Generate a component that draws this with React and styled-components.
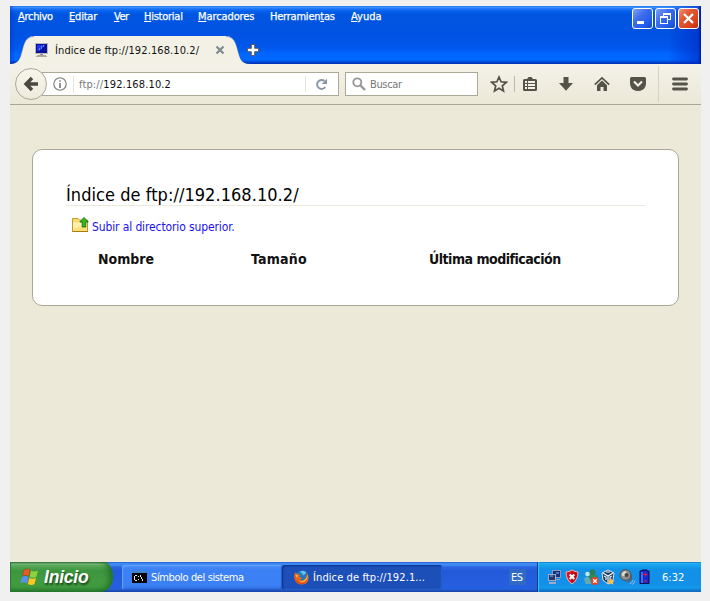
import React from "react";
import styled, { createGlobalStyle, css } from "styled-components";

const UI = `"DejaVu Sans Condensed", "Noto Sans", sans-serif`;

const GlobalStyle = createGlobalStyle`
  *, *::before, *::after { box-sizing: border-box; }
  body { margin: 0; background: #f0f0f0; font: 11px/16px ${UI}; color: #222; }
  svg { display: block; flex: none; }
`;

const Screen = styled.div`
  height: 601px;
  padding: 6px 9px 9px 10px;
  overflow: hidden;
`;

const Desktop = styled.div`
  height: 586px;
  display: flex;
  flex-direction: column;
  background: #ece9d8;
`;

/* Title bar */
const TitleBar = styled.header`
  height: 58px;
  flex: none;
  position: relative;
  background:
    linear-gradient(90deg, rgba(0, 45, 190, 0.45), transparent 5px),
    linear-gradient(270deg, #001b9c 0, rgba(0, 40, 190, 0.6) 3px, rgba(0, 40, 200, 0.45) 12px, transparent 34px),
    linear-gradient(180deg, #1a6fe8 0, #3d94ff 1px, #1b74f8 3px, #0560ec 5px, #0055e0 9px, #0053e2 28px, #0057ec 42px, #0066ff 48px, #0068ff 54px, #0049d4 56px, #002fae 58px);
`;

const MenuBar = styled.nav`
  display: flex;
  height: 30px;
  padding: 3px 0 0 8px;
`;

const MenuItem = styled.span`
  width: ${(p) => p.$width}px;
  white-space: nowrap;
  color: #fff;
  letter-spacing: ${(p) => p.$track}px;
  -webkit-text-stroke: 0.25px #fff;
  u { text-underline-offset: 1px; text-decoration-thickness: 1px; }
`;

const TabStrip = styled.div`
  display: flex;
  height: 28px;
`;

const Tab = styled.div`
  width: 192px;
  height: 28px;
  display: flex;
  align-items: center;
  background: #f3f1e6;
  color: #111;
`;

const TabLabel = styled.span`
  width: 160px;
  margin-left: 6px;
  padding-top: 1px;
  letter-spacing: 0.1px;
  white-space: nowrap;
`;

const NewTab = styled.div`
  margin: 8px 0 0 -3px;
`;

const WindowButtons = styled.div`
  position: absolute;
  top: 2px;
  right: 2px;
  display: flex;
  gap: 2px;
`;

const WindowButton = styled.button`
  width: 21px;
  height: 21px;
  padding: 0;
  border: 1px solid #fff;
  border-radius: 3px;
  background: ${(p) =>
    p.$danger
      ? "linear-gradient(135deg, #eb9479 0%, #e35a36 35%, #d9431c 75%, #b82f08 100%)"
      : "linear-gradient(135deg, #7da1f4 0%, #3d6cec 40%, #215cec 75%, #1447c4 100%)"};
`;

/* Navigation toolbar */
const Toolbar = styled.div`
  height: 41px;
  flex: none;
  display: flex;
  align-items: center;
  padding-left: 5px;
  border-bottom: 1px solid #aaa797;
  background: linear-gradient(#f4f2e8, #ebe8d8);
`;

const BackButton = styled.button`
  width: 32px;
  height: 32px;
  padding: 0;
  flex: none;
  display: grid;
  place-items: center;
  z-index: 1;
  border: 1px solid #aca999;
  border-radius: 50%;
  background: linear-gradient(#f7f5ec, #eeebdc);
`;

const Field = styled.div`
  height: 24px;
  display: flex;
  align-items: center;
  background: #fff;
  border: 1px solid #aca999;
`;

const AddressField = styled(Field)`
  width: 297px;
  margin-left: -5px;
  padding-left: 10px;
`;

const Address = styled.span`
  width: 232px;
  margin-left: 6px;
  padding: 1px 0 0 5px;
  border-left: 1px solid #e5e3da;
  letter-spacing: 0.14px;
  color: #111;
  i { font-style: normal; color: #777; }
`;

const Reload = styled.span`
  padding: 2px 0 1px 9px;
  border-left: 1px solid #e5e3da;
`;

const SearchField = styled(Field)`
  width: 133px;
  margin-left: 6px;
  padding-left: 6px;
  gap: 4px;
  color: #777;
  letter-spacing: -0.35px;
`;

const SearchHint = styled.span`
  padding-top: 2px;
`;

const Divider = styled.span`
  width: 1px;
  height: ${(p) => p.$height}px;
  flex: none;
  background: ${(p) => p.$color};
`;

const Tools = styled.div`
  display: grid;
  grid-template-columns: 31px 1px 30px 42px 30px 41px 1px 42px;
  align-items: center;
  justify-items: center;
  margin-left: 5px;
`;

/* Directory listing */
const Viewport = styled.main`
  flex: 1;
  padding: 44px 22px 0;
`;

const Card = styled.section`
  height: 157px;
  padding: 33px 33px 0;
  border: 1px solid #aba898;
  border-radius: 10px;
  background: #fff;
`;

const Title = styled.h1`
  margin: 0;
  height: 23px;
  border-bottom: 1px solid #ece9dc;
  font: 400 18px/23px ${UI};
  letter-spacing: 0.05px;
  color: #000;
`;

const ParentLink = styled.a`
  display: flex;
  gap: 3px;
  height: 18px;
  margin: 11px 0 0 6px;
  font-size: 12px;
  line-height: 20px;
  letter-spacing: -0.12px;
  color: #1a12f0;
`;

const Columns = styled.div`
  display: grid;
  grid-template-columns: 153px 178px 1fr;
  margin: 14px 0 0 32px;
  font: 700 14px/20px ${UI};
  color: #111;
`;

const Heading = styled.span`
  letter-spacing: ${(p) => p.$track || 0}px;
`;

/* Taskbar */
const Taskbar = styled.footer`
  height: 30px;
  flex: none;
  display: flex;
  color: #fff;
  background: linear-gradient(#1d4eb9 0, #3d86f0 1px, #3f8cf3 3px, #2b67e0 5px, #2259d8 9px, #255fe0 24px, #2460dc 27px, #1941a5 30px);
`;

const StartButton = styled.button`
  width: 103px;
  height: 30px;
  padding: 0 0 1px 10px;
  border: 0;
  border-radius: 0 9px 12px 0 / 0 15px 15px 0;
  display: flex;
  align-items: center;
  gap: 4px;
  color: #fff;
  font: italic 700 17.5px/28px "Liberation Sans", sans-serif;
  letter-spacing: -0.2px;
  text-shadow: 1px 2px 2px #17451a;
  background: linear-gradient(#2f6f35 0, #72b574 2px, #4ea250 5px, #3c963e 9px, #429b40 20px, #3e993d 25px, #23752b 30px);
  box-shadow: inset -8px 0 7px -5px #1f6925, inset 1px 0 1px #2d7936;
`;

const TaskButton = styled.button`
  width: 160px;
  height: 25px;
  margin: 3px 0 0 ${(p) => p.$gap}px;
  padding: 0 0 0 ${(p) => p.$inset}px;
  display: flex;
  align-items: center;
  gap: 4px;
  border: 0;
  border-radius: 3px;
  color: #fff;
  font: 11px/16px ${UI};
  letter-spacing: ${(p) => p.$track}px;
  white-space: nowrap;
  ${(p) =>
    p.$active
      ? css`
          background: #1c50b8;
          box-shadow: inset 1px 1px 2px #0c3288, inset -1px -1px 1px #2a65cd;
        `
      : css`
          background: linear-gradient(#4c8ff7, #3b80f4 5px, #3b80f4 20px, #2e6ee0);
          box-shadow: inset 1px 1px 1px #66a3fb, inset -1px -1px 1px #2458c2;
        `}
`;

const Language = styled.span`
  height: 16px;
  margin: 7px 0 0 67px;
  padding: 0 2px;
  width: 17px;
  line-height: 17px;
  letter-spacing: -0.6px;
  background: #316ac5;
`;

const Tray = styled.div`
  width: 164px;
  margin-left: auto;
  display: grid;
  grid-template-columns: 18px 19px 17px 18px 20px 20px 1fr;
  align-items: center;
  padding-left: 9px;
  border-left: 1px solid #0b3d91;
  background: linear-gradient(#0d55ae 0, #23b1f5 1px, #1aa3ee 3px, #1191e8 7px, #1390e8 22px, #1499ec 26px, #0f60b5 30px);
  box-shadow: inset 1px 0 1px #35c2f8;
`;

const Clock = styled.time`
  padding-left: 3px;
  padding-top: 1px;
`;

const TabEdge = ({ flip }) => (
  <svg width="24" height="28" viewBox="0 0 24 28">
    <g transform={flip ? "translate(24 0) scale(-1 1)" : undefined}>
      <path d="M0 28C9 28 10 22 12 15C14 7 16 0 24 0V28Z" fill="#f3f1e6" />
      <path d="M0 27.5C9 27.5 10 22 12 15C14 7 16 .5 24 .5" fill="none" stroke="#174da8" strokeOpacity=".45" />
    </g>
  </svg>
);

const ComputerIcon = () => (
  <svg width="15" height="16" viewBox="0 0 15 16" shapeRendering="crispEdges">
    <path d="M1 1h13v11H1z" fill="#b9b9b4" />
    <path d="M2 2h11v9H2z" fill="#0a109b" />
    <path d="M3 3h8L6 9H3z" fill="#1c35e8" />
    <path d="M5 6h1v2H5zM7 4h1v3H7zM9 3h1v2H9z" fill="#5f80ff" />
    <path d="M6 12h3v1H6z" fill="#888" />
    <path d="M3 13h9v1h1v1H2v-1h1z" fill="#aaa9a2" />
  </svg>
);

const CloseTabIcon = () => (
  <svg width="10" height="10" viewBox="0 0 10 10">
    <path d="M1.500 1.500l7 7m0-7l-7 7" stroke="#7d8a90" strokeWidth="2.200" />
  </svg>
);

const PlusIcon = () => (
  <svg width="12" height="12" viewBox="0 0 12 12">
    <path d="M4.300 .5h3.400v3.800h3.800v3.400H7.700v3.800H4.300V7.700H.5V4.300h3.800z" fill="#fff" stroke="#5d5a50" />
  </svg>
);

const MinimizeGlyph = () => (
  <svg width="19" height="19" shapeRendering="crispEdges"><path d="M4 12h7v3H4z" fill="#fff" /></svg>
);
const RestoreGlyph = () => (
  <svg width="19" height="19" viewBox="0 0 19 19" shapeRendering="crispEdges">
    <path d="M7 4h8v7h-3v-1h2V6H8v1H7zM4 7h8v8H4zM5 9v5h6V9z" fill="#fff" fillRule="evenodd" />
  </svg>
);
const CloseGlyph = () => (
  <svg width="19" height="19"><path d="M5 5l9 9m0-9l-9 9" stroke="#fff" strokeWidth="2.300" /></svg>
);

const BackIcon = () => (
  <svg width="16" height="16" viewBox="0 0 16 16">
    <path d="M9 2L3 8l6 6M3.500 8H15" fill="none" stroke="#4b483f" strokeWidth="3.400" />
  </svg>
);
const InfoIcon = () => (
  <svg width="14" height="14" viewBox="0 0 14 14">
    <circle cx="7" cy="7" r="6.200" fill="none" stroke="#777" strokeWidth="1.100" />
    <path d="M6.200 6h1.600v5H6.200zM6.200 3.200h1.600v1.600H6.200z" fill="#777" />
  </svg>
);
const ReloadIcon = () => (
  <svg width="13" height="13" viewBox="0 0 13 13">
    <path d="M10.300 9A4.500 4.500 0 1 1 9.500 3" fill="none" stroke="#8896a6" strokeWidth="1.900" />
    <path d="M12 .8V6H6.800z" fill="#8896a6" />
  </svg>
);
const SearchIcon = () => (
  <svg width="14" height="14" viewBox="0 0 14 14">
    <circle cx="5.300" cy="5.300" r="4" fill="none" stroke="#969696" strokeWidth="1.800" />
    <path d="M8 8l5 5" stroke="#969696" strokeWidth="2.400" />
  </svg>
);

const INK = "#55524a";
const StarIcon = () => (
  <svg width="18" height="18" viewBox="0 0 18 18">
    <path d="M9 2l2.100 4.800 5.200.5-4 3.500 1.200 5.200L9 13.300 4.500 16l1.200-5.200-4-3.500 5.200-.5z" fill="none" stroke={INK} strokeWidth="1.700" />
  </svg>
);
const ListIcon = () => (
  <svg width="16" height="16" viewBox="0 0 16 16">
    <path d="M1 4.500Q1 3 2.500 3H5l1.500-2h3L11 3h2.500Q15 3 15 4.500v9Q15 15 13.500 15h-11Q1 15 1 13.500z" fill={INK} />
    <path d="M3 5h2v2H3zM6 5h7v2H6zM3 8h2v2H3zM6 8h7v2H6zM3 11h2v2H3zM6 11h7v2H6z" fill="#f4f2e8" />
  </svg>
);
const DownloadIcon = () => (
  <svg width="16" height="16" viewBox="0 0 16 16"><path d="M5.500 1h5v6H15l-7 7.800L1 7h4.500z" fill={INK} /></svg>
);
const HomeIcon = () => (
  <svg width="16" height="16" viewBox="0 0 16 16">
    <path d="M.8 8.600L8 1.800l7.200 6.800" fill="none" stroke={INK} strokeWidth="1.700" />
    <path d="M8 4.500l5 4.800V15H9.500v-4h-3v4H3V9.300z" fill={INK} />
  </svg>
);
const PocketIcon = () => (
  <svg width="16" height="16" viewBox="0 0 16 16">
    <path d="M1.500 1h13Q16 1 16 2.500V7Q16 11 13 13.500 10.500 15 8 15t-5-1.500Q0 11 0 7V2.500Q0 1 1.500 1z" fill={INK} />
    <path d="M4 5.500l4 4 4-4" fill="none" stroke="#f4f2e8" strokeWidth="2.100" />
  </svg>
);
const HamburgerIcon = () => (
  <svg width="16" height="14" viewBox="0 0 16 14">
    <path d="M1.500 2h13M1.500 7h13M1.500 12h13" stroke={INK} strokeWidth="2.800" strokeLinecap="round" />
  </svg>
);

const FolderUpIcon = () => (
  <svg width="17" height="16" viewBox="0 0 17 16">
    <path d="M.5 1.500H6L7.500 3h8v11.500H.5z" fill="#f8dc72" stroke="#c49a25" />
    <path d="M1 5.500h14v3.500q-7 0-14 3z" fill="#fff0b0" />
    <path d="M1 12q7-3 14-3v5H1z" fill="#ffe07a" />
    <path d="M.5 14.500h15.500" stroke="#a97b12" />
    <path d="M12 .5l4.300 4.500h-2.500v5h-3.600V5H7.800z" fill="#35b722" stroke="#147315" strokeWidth=".9" />
  </svg>
);

const WindowsFlag = () => (
  <svg width="20" height="18" viewBox="0 0 20 18">
    <path d="M4 2q3-2.500 6 0L8.700 8.200q-3-2-6.300-.2z" fill="#ee5a24" stroke="#823315" strokeWidth=".4" />
    <path d="M11 2.500q3 2 7 0L16.300 9q-3.500 1.700-6.600-.3z" fill="#8cd33e" />
    <path d="M2.100 9q3.200-2 6.300.3L7 15.500q-3-2.200-6.700-.2z" fill="#5b90f1" />
    <path d="M9.400 9.800q3 1.900 6.600.2l-1.600 6.300q-3.300 1.700-6.500-.4z" fill="#ffc71e" />
  </svg>
);

const ConsoleIcon = () => (
  <svg width="15" height="14" viewBox="0 0 15 14" shapeRendering="crispEdges">
    <path d="M0 0h15v12H0z" fill="#050505" />
    <path d="M0 0h15v2H0z" fill="#4385c5" />
    <path d="M3 4h2v1H3v4h2v1H3V9H2V5h1zM6 5h1v1H6zM6 8h1v1H6zM8 4h1v2h1v2h1v2h-1V8H9V6H8z" fill="#e8e8e8" />
  </svg>
);

const FirefoxIcon = () => (
  <svg width="15" height="15" viewBox="0 0 15 15">
    <circle cx="7.700" cy="7" r="6.400" fill="#2876bd" />
    <path d="M6 1.500q4-2 6.500 1l-3 3z" fill="#5cc1e7" />
    <path d="M1.300 2.500Q-.8 6 1 10.200q2 4.300 6.800 4.300t6.400-4.300Q15.500 6 13 3q.4 4-1.500 6Q9 11.500 6 9.500L8.500 8 5 7l1.500-2-2.700-.6z" fill="#ee6a19" />
    <path d="M1.500 3.500Q.5 7 2.500 10q2.500 3 6 3t5.200-3Q13 14 8 14 3 14 1.500 9.500 .5 6.500 1.500 3.500z" fill="#e0451a" />
    <path d="M13.300 4.500q.5 5-3 7-3 1.500-5.500 0 3.500.5 5.700-1.500Q13 8 13.300 4.500zM1.500 5l2-.5L3 8z" fill="#ffc53a" />
  </svg>
);

const NetworkIcon = () => (
  <svg width="15" height="16" viewBox="0 0 15 16" shapeRendering="crispEdges">
    <path d="M5 1h9v8H5zM7 10h6v1H7z" fill="#8d98bd" />
    <path d="M6 2h7v6H6z" fill="#17327c" />
    <path d="M1 5h8v7H1zM2 13h7v2H2z" fill="#a1a9c4" />
    <path d="M2 6h6v5H2z" fill="#26376e" />
    <path d="M3 6h3v2H3zM9 3h3v2H9z" fill="#5174b8" />
  </svg>
);
const ShieldIcon = () => (
  <svg width="14" height="16" viewBox="0 0 14 16">
    <path d="M7 1q3 2 6 2 0 8-6 12Q1 11 1 3q3 0 6-2z" fill="#d91521" stroke="#f2b2ae" />
    <path d="M7 2q2.500 1.500 5 1.700Q12 10 7 14z" fill="#b30d19" />
    <path d="M4.700 5.500l4.600 4.500m0-4.500L4.700 10" stroke="#fff" strokeWidth="2" />
  </svg>
);
const PeopleIcon = () => (
  <svg width="16" height="16" viewBox="0 0 16 16">
    <circle cx="8.500" cy="3.200" r="3" fill="#2c7d58" />
    <path d="M4 7q5-2.500 9-1l1 6H4z" fill="#2d8a5c" />
    <circle cx="3.500" cy="5" r="2.300" fill="#c3e6de" />
    <path d="M0 9.500q3-3 5.500-.5l2 6H1.500z" fill="#64aab0" />
    <circle cx="11" cy="12" r="3.900" fill="#e44127" />
    <path d="M9.200 10.200l3.600 3.600m0-3.600l-3.600 3.600" stroke="#fff" strokeWidth="1.300" />
  </svg>
);
const CubeIcon = () => (
  <svg width="14" height="16" viewBox="0 0 14 16">
    <path d="M7 1l6 3-1 7-5 4-5-4-1-7z" fill="#183b62" stroke="#d8e6f2" />
    <path d="M2 4l5 3 5-3M7 7v7M3 7l2 1v3M11 7L9 8v3M5 3h4" fill="none" stroke="#f2f7fc" strokeWidth="1.200" />
    <path d="M10 9l1.200 2.200 2.500.3-1.800 1.700.5 2.500L10 14.500l-2.400 1.200.5-2.500-1.800-1.700 2.500-.3z" fill="#ffc34a" />
  </svg>
);
const SpeakerIcon = () => (
  <svg width="17" height="16" viewBox="0 0 17 16">
    <path d="M6 12q6 1 6-5l1-2v6l-4 2.500z" fill="#5c5d5e" />
    <ellipse cx="6.500" cy="6" rx="5.500" ry="5.300" fill="#8f908d" stroke="#4b4c4a" />
    <path d="M2.500 6q1-4 4.500-3.800l1 2.300-3 3z" fill="#deded9" />
    <circle cx="7.500" cy="6" r="2" fill="#444544" />
    <path d="M10.500 15q3-1 3.500-4M13 15.500q2.500-1 3-4" fill="none" stroke="#8fb0f5" />
  </svg>
);
const BatteryIcon = () => (
  <svg width="11" height="16" viewBox="0 0 11 16">
    <path d="M3 2V1h5v1h2v12.500H1V2z" fill="#1a27cb" stroke="#080c50" />
    <path d="M3 3v11" stroke="#3e8eff" strokeWidth="1.500" />
    <path d="M6.500 3.500v4M4.500 5.500h4M5 12h3" stroke="#f01c28" />
  </svg>
);

const menus = [
  ["", "A", "rchivo", 51, -0.3],
  ["", "E", "ditar", 45, -0.2],
  ["", "V", "er", 30, -0.5],
  ["", "H", "istorial", 54, -0.25],
  ["", "M", "arcadores", 72, -0.1],
  ["Herramien", "t", "as", 81, -0.22],
  ["", "A", "yuda", 40, 0],
];

export default function App() {
  return (
    <Screen>
      <GlobalStyle />
      <Desktop>
        <TitleBar>
          <MenuBar>
            {menus.map(([before, key, after, width, track]) => (
              <MenuItem key={before + key + after} $width={width} $track={track}>
                {before}<u>{key}</u>{after}
              </MenuItem>
            ))}
          </MenuBar>
          <TabStrip>
            <TabEdge />
            <Tab>
              <ComputerIcon />
              <TabLabel>Índice de ftp://192.168.10.2/</TabLabel>
              <CloseTabIcon />
            </Tab>
            <TabEdge flip />
            <NewTab><PlusIcon /></NewTab>
          </TabStrip>
          <WindowButtons>
            <WindowButton aria-label="Minimizar"><MinimizeGlyph /></WindowButton>
            <WindowButton aria-label="Restaurar"><RestoreGlyph /></WindowButton>
            <WindowButton aria-label="Cerrar" $danger><CloseGlyph /></WindowButton>
          </WindowButtons>
        </TitleBar>
        <Toolbar>
          <BackButton aria-label="Atrás"><BackIcon /></BackButton>
          <AddressField>
            <InfoIcon />
            <Address><i>ftp://</i>192.168.10.2</Address>
            <Reload><ReloadIcon /></Reload>
          </AddressField>
          <SearchField><SearchIcon /><SearchHint>Buscar</SearchHint></SearchField>
          <Tools>
            <StarIcon />
            <Divider $height={16} $color="#bcb9aa" />
            <ListIcon />
            <DownloadIcon />
            <HomeIcon />
            <PocketIcon />
            <Divider $height={36} $color="#d5d2c4" />
            <HamburgerIcon />
          </Tools>
        </Toolbar>
        <Viewport>
          <Card>
            <Title>Índice de ftp://192.168.10.2/</Title>
            <ParentLink><FolderUpIcon />Subir al directorio superior.</ParentLink>
            <Columns>
              <Heading>Nombre</Heading>
              <Heading $track={0.2}>Tamaño</Heading>
              <Heading $track={-0.5}>Última modificación</Heading>
            </Columns>
          </Card>
        </Viewport>
        <Taskbar>
          <StartButton><WindowsFlag />Inicio</StartButton>
          <TaskButton $gap={9} $inset={10} $track={-0.38}><ConsoleIcon />Símbolo del sistema</TaskButton>
          <TaskButton $gap={0} $inset={12} $track={0.1} $active><FirefoxIcon />Índice de ftp://192.1...</TaskButton>
          <Language>ES</Language>
          <Tray>
            <NetworkIcon />
            <ShieldIcon />
            <PeopleIcon />
            <CubeIcon />
            <SpeakerIcon />
            <BatteryIcon />
            <Clock>6:32</Clock>
          </Tray>
        </Taskbar>
      </Desktop>
    </Screen>
  );
}
